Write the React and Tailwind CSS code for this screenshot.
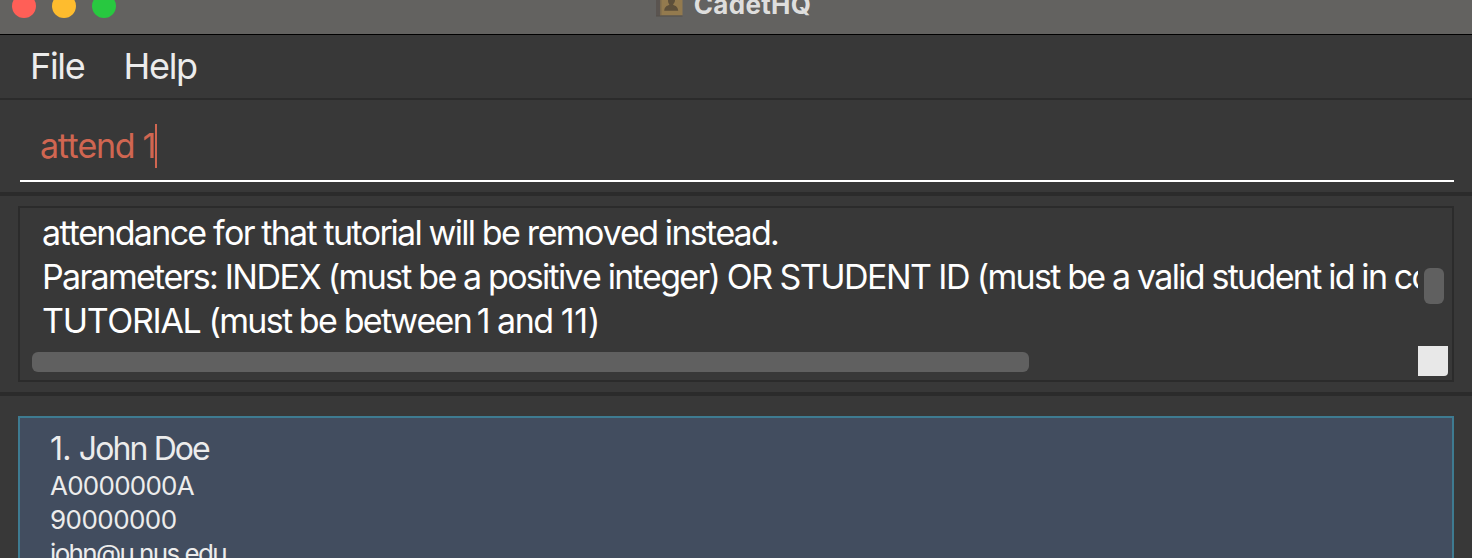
function BookIcon() {
  return (
    <svg width="30" height="18" viewBox="0 0 30 18" className="shrink-0">
      <rect x="1" y="-8" width="5" height="24" fill="#5a5450" />
      <rect x="5" y="-8" width="22.500" height="23.500" fill="#937a4e" />
      <rect x="5" y="-8" width="1.5" height="24" fill="#7d6a4c" />
      <rect x="1" y="15.500" width="26.500" height="1" fill="#544e48" />
      <path d="M13 0h7c0 2-1 3.500-1.800 4v1c2.500.7 4.700 1.800 5 5.800h-14c.3-4 2.500-5.100 5-5.800v-1c-.8-.5-1.200-2-1.200-4z" fill="#5d4f3a" />
    </svg>
  );
}

function TitleBar() {
  return (
    <header className="relative flex h-[35px] shrink-0 justify-center border-b border-black bg-[#636260]">
      <div className="absolute -top-1.5 left-3 flex gap-4">
        <span className="size-6 rounded-full bg-[#ff5f57]" />
        <span className="size-6 rounded-full bg-[#febc2e]" />
        <span className="size-6 rounded-full bg-[#28c840]" />
      </div>
      <div className="flex items-start pr-1.5">
        <BookIcon />
        <h1 className="-mt-[11px] ml-[9px] text-[26px] leading-8 font-bold tracking-[0.3px] text-[#dededd]">CadetHQ</h1>
      </div>
    </header>
  );
}

function MenuBar() {
  return (
    <nav className="flex h-[65px] shrink-0 items-start gap-[39px] border-b-2 border-[#2b2b2b] pt-[9px] pl-[30px] text-[36px] leading-[44px] text-[#ececec]">
      <span className="tracking-[-1.3px]">File</span>
      <span className="tracking-[-1.3px]">Help</span>
    </nav>
  );
}

function CommandBox() {
  return (
    <section className="h-24 shrink-0 border-b-4 border-[#2b2b2b] pr-[18px] pl-5">
      <div className="flex h-[82px] items-start border-b-2 border-white pt-6 pl-5">
        <span className="text-[34px] leading-[44px] tracking-[-1.3px] text-[#d06651]">attend 1</span>
        <span className="h-11 w-0.5 bg-[#d06651]" />
      </div>
    </section>
  );
}

function ResultDisplay() {
  return (
    <section className="h-[200px] shrink-0 border-b-4 border-[#2b2b2b] pt-2.5 pr-[18px] pl-[18px]">
      <div className="flex h-44 flex-col border-2 border-[#2b2b2b]">
        <div className="flex h-[138px]">
          <div className="w-[1398px] overflow-hidden pt-[3px] pl-[22px] text-[34px] leading-[44px] tracking-[-1.7px] whitespace-nowrap text-white [word-spacing:-0.3px]">
            <p>attendance for that tutorial will be removed instead.</p>
            <p>
              Parameters: <span className="tracking-[-1.5px]">INDEX </span>(must be a positive integer){" "}
              <span className="tracking-[-1.5px]">OR STUDENT ID </span>(must be a valid student id in correct format)
            </p>
            <p>
              <span className="tracking-[-1.3px]">TUTORIAL </span>(must be between <span className="-ml-[2px] tracking-[-1.4px]">1 and </span><span className="tracking-[-0.2px]">11)</span>
            </p>
          </div>
          <div className="pt-[60px] pl-1.5">
            <div className="h-9 w-5 rounded-md bg-[#606060]" />
          </div>
        </div>
        <div className="flex items-start justify-between pr-1 pl-3">
          <div className="mt-1.5 h-5 w-[997px] rounded-md bg-[#606060]" />
          <div className="size-[30px] rounded-br bg-[#e8e8e8]" />
        </div>
      </div>
    </section>
  );
}

function PersonList() {
  return (
    <section className="flex-1 px-[18px] pt-5">
      <article className="h-60 border-2 border-[#3e7b91] bg-[#424d5f] pt-[11px] pl-[30px] text-[#ececec]">
        <h2 className="text-[32px] leading-10 tracking-[-1.9px]">
          <span className="tracking-[-0.8px]">1. </span>John Doe
        </h2>
        <p className="text-[26px] leading-[34px] tracking-[-0.75px]">A0000000A</p>
        <p className="text-[26px] leading-[34px] tracking-[-0.55px]">90000000</p>
        <p className="text-[26px] leading-[34px] tracking-[-1.65px]">john@u.nus.edu</p>
      </article>
    </section>
  );
}

export default function App() {
  return (
    <main className="flex h-[558px] w-[1472px] flex-col overflow-hidden bg-[#383838] font-['Inter',sans-serif] [font-kerning:none]">
      <TitleBar />
      <MenuBar />
      <CommandBox />
      <ResultDisplay />
      <PersonList />
    </main>
  );
}
